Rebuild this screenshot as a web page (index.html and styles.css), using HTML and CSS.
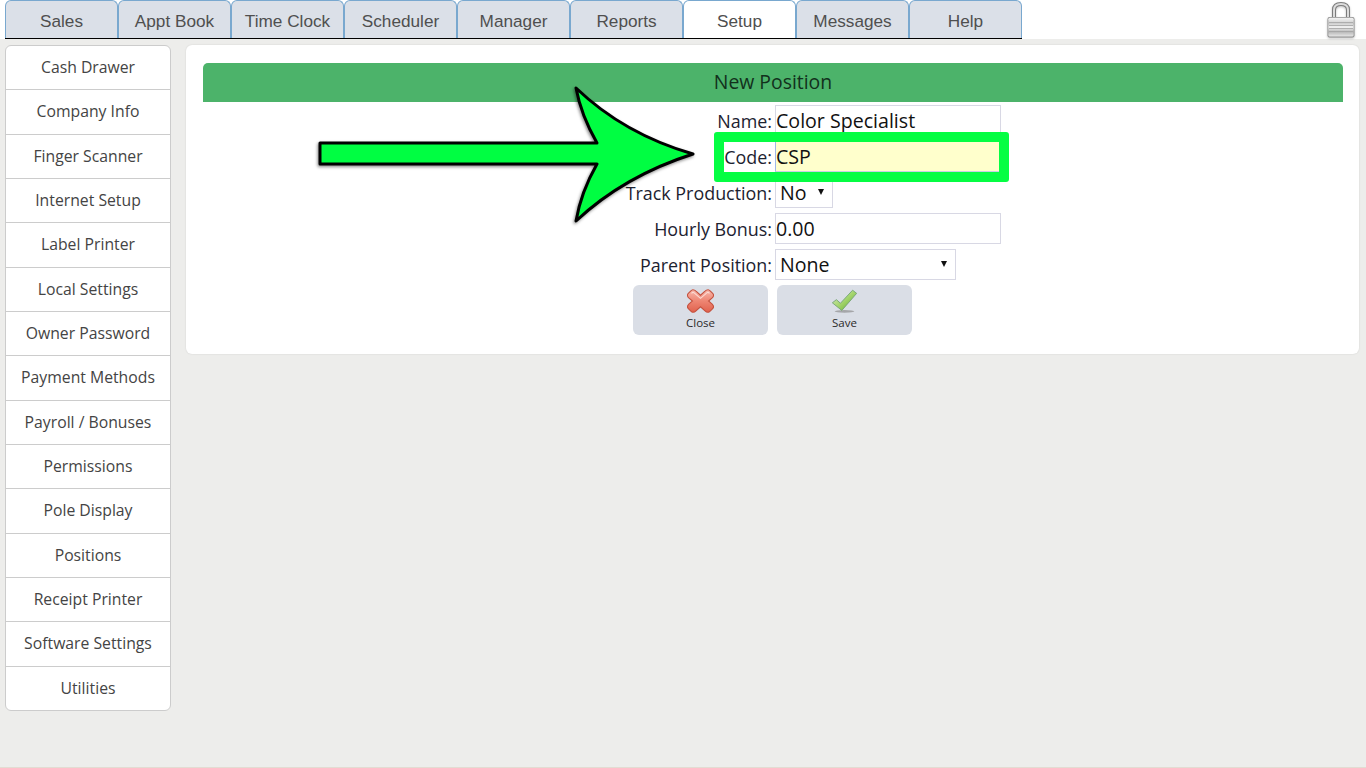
FILE: index.html
```html
<!DOCTYPE html>
<html lang="en">
<head>
<meta charset="utf-8">
<title>Setup - New Position</title>
<link rel="stylesheet" href="styles.css">
</head>
<body>
<header class="topbar">
  <nav class="tabs">
    <a class="tab">Sales</a><a class="tab">Appt Book</a><a class="tab">Time Clock</a><a class="tab">Scheduler</a><a class="tab">Manager</a><a class="tab">Reports</a><a class="tab active">Setup</a><a class="tab">Messages</a><a class="tab">Help</a>
  </nav>
  <svg class="lock" width="30" height="37" viewBox="0 0 30 37">
    <defs>
      <linearGradient id="lockBody" x1="0" y1="0" x2="0" y2="1">
        <stop offset="0" stop-color="#f4f4f4"/><stop offset=".3" stop-color="#cfcfcf"/><stop offset=".5" stop-color="#f2f2f2"/><stop offset=".75" stop-color="#b8b8b8"/><stop offset="1" stop-color="#e6e6e6"/>
      </linearGradient>
    </defs>
    <path d="M8 17V9C8 4.500 10.500 3 15 3s7 1.500 7 6V17" fill="none" stroke="#7c7c7c" stroke-width="4"/>
    <path d="M8 17V9C8 4.500 10.500 3 15 3s7 1.500 7 6V17" fill="none" stroke="#dcdcdc" stroke-width="2"/>
    <rect x="1.500" y="16" width="27" height="20.500" rx="2" fill="#8e8e8e"/>
    <rect x="2.300" y="16.800" width="25.400" height="18.700" rx="1.500" fill="url(#lockBody)"/>
    <path d="M3 21.500h24M3 24.500h24M3 27.500h24M3 30.500h24" stroke="#a2a2a2" stroke-width=".8"/>
  </svg>
</header>

<main class="content">
  <aside class="sidebar">
    <a class="side-item">Cash Drawer</a>
    <a class="side-item">Company Info</a>
    <a class="side-item">Finger Scanner</a>
    <a class="side-item">Internet Setup</a>
    <a class="side-item">Label Printer</a>
    <a class="side-item">Local Settings</a>
    <a class="side-item">Owner Password</a>
    <a class="side-item">Payment Methods</a>
    <a class="side-item">Payroll / Bonuses</a>
    <a class="side-item">Permissions</a>
    <a class="side-item">Pole Display</a>
    <a class="side-item">Positions</a>
    <a class="side-item">Receipt Printer</a>
    <a class="side-item">Software Settings</a>
    <a class="side-item">Utilities</a>
  </aside>

  <section class="panel">
    <h1 class="panel-title">New Position</h1>
    <form class="form">
      <div class="row"><label class="label">Name:</label><div class="field field-text">Color Specialist</div></div>
      <div class="row"><label class="label label-code">Code:</label><div class="field field-text field-focus">CSP</div></div>
      <div class="row"><label class="label">Track Production:</label><div class="field field-select field-short"><span>No</span><i class="caret"></i></div></div>
      <div class="row"><label class="label">Hourly Bonus:</label><div class="field field-text">0.00</div></div>
      <div class="row"><label class="label">Parent Position:</label><div class="field field-select field-wide"><span>None</span><i class="caret"></i></div></div>
    </form>
    <div class="actions">
      <button class="btn" type="button">
        <svg class="btn-icon" viewBox="0 0 30 28">
          <defs><linearGradient id="xg" x1="0" y1="0" x2="0" y2="1"><stop offset="0" stop-color="#f7b9ad"/><stop offset=".5" stop-color="#ee8572"/><stop offset="1" stop-color="#e0624e"/></linearGradient></defs>
          <path d="M6.500 1.500C8 1.500 9 2 10 3l5 4.500L20 3c1-1 2-1.500 3.500-1.500 1 0 1.500.5 2.500 1.500l2 2c1 1 1.500 1.500 1.500 2.500S29 9.500 28 10.500l-4 3.500 4 3.500c1 1 1.500 2 1.500 3s-.5 1.500-1.500 2.500l-2 2c-1 1-1.500 1.500-2.500 1.500-1.500 0-2.500-.5-3.500-1.500l-5-4.500-5 4.500c-1 1-2 1.500-3.500 1.500-1 0-1.500-.5-2.500-1.500l-2-2C1 22 .5 21.500.5 20.500s.5-2 1.500-3L6 14l-4-3.500C1 9.500.5 8.500.5 7.500S1 6 2 5l2-2c1-1 1.500-1.500 2.500-1.500z" fill="url(#xg)" stroke="#c4513e" stroke-width="1.200"/>
          <path d="M5 5.500c1-1 2-1.500 3-.5l7 6 7-6c1-1 2-.5 3 .5" fill="none" stroke="#fbdad3" stroke-width="1.200"/>
        </svg>
        <span>Close</span>
      </button>
      <button class="btn" type="button">
        <svg class="btn-icon" viewBox="0 0 30 28">
          <defs><linearGradient id="cg" x1="0" y1="0" x2="1" y2="1"><stop offset="0" stop-color="#dff0d0"/><stop offset=".5" stop-color="#a5d56e"/><stop offset="1" stop-color="#5da826"/></linearGradient></defs>
          <ellipse cx="15" cy="25.500" rx="11" ry="1.500" fill="#8f8f8f" opacity=".7"/>
          <path d="M1.500 16 6 12.500l4.500 4L24 2l4.500 3.500L12 24.500z" fill="url(#cg)" stroke="#74a474" stroke-width="1" stroke-linejoin="round"/>
        </svg>
        <span>Save</span>
      </button>
    </div>
  </section>
</main>
<div class="footer-line"></div>

<div class="highlight"></div>
<svg class="arrow" width="395" height="150" viewBox="310 80 395 150">
  <defs>
    <filter id="arrowShadow" x="-5%" y="-5%" width="110%" height="115%"><feDropShadow dx="-1" dy="1.500" stdDeviation="1.500" flood-color="#000" flood-opacity=".45"/></filter>
  </defs>
  <path d="M320 143H597Q581 115 576 88Q624 134 693 154Q624 176 576 221Q581 192 597 164H320Z" fill="#05fe43" stroke="#000" stroke-width="3" stroke-linejoin="round" filter="url(#arrowShadow)"/>
</svg>
</body>
</html>
```

FILE: styles.css
```css
* { box-sizing: border-box; }
html, body { margin: 0; padding: 0; }
body {
  position: relative;
  width: 1366px;
  height: 768px;
  overflow: hidden;
  display: flex;
  flex-direction: column;
  background: #ededeb;
  font-family: "Open Sans", sans-serif;
  color: #222;
}
.topbar {
  height: 39px;
  flex: none;
  background: #fff;
  padding: 0 10px 0 5px;
  display: flex;
  justify-content: space-between;
  align-items: flex-start;
}
.tabs { display: flex; height: 39px; border-bottom: 1px solid #000; }
.tab {
  width: 113px;
  height: 38px;
  background: #dbe0e8;
  border: 1px solid #79a8cf;
  border-bottom: 0;
  border-radius: 6px 6px 0 0;
  color: #4f4f4f;
  font: 17.2px/41px "Liberation Sans", Arial, sans-serif;
  text-align: center;
}
.tab.active { background: #fff; }
.lock { margin-top: 1px; filter: drop-shadow(0 1px 1px rgba(0,0,0,.25)); }

.content {
  flex: 1;
  display: flex;
  align-items: flex-start;
  gap: 15px;
  padding: 6px 7px 0 5px;
}
.sidebar {
  width: 166px;
  height: 666px;
  flex: none;
  display: flex;
  flex-direction: column;
  background: #fff;
  border: 1px solid #ccc;
  border-radius: 6px;
}
.side-item {
  flex: 1;
  display: flex;
  align-items: center;
  justify-content: center;
  padding-bottom: 1px;
  font-size: 15.75px;
  color: #444;
  border-bottom: 1px solid #ccc;
}
.side-item:last-child { border-bottom: 0; }

.panel {
  flex: 1;
  height: 309px;
  background: #fff;
  border-radius: 6px;
  box-shadow: 0 0 2px rgba(0,0,0,.12);
  padding: 18px 16px 20px 17px;
}
.panel-title {
  margin: 0;
  height: 39px;
  background: #4cb36a;
  border-radius: 5px 5px 0 0;
  color: #12301c;
  font-size: 19.4px;
  font-weight: 400;
  line-height: 37px;
  text-align: center;
}
.form { padding-top: 3px; display: flex; flex-direction: column; }
.row { display: flex; height: 36px; gap: 3px; }
.label {
  width: 569px;
  flex: none;
  text-align: right;
  font-size: 17.9px;
  line-height: 32px;
  color: #1c2230;
}
.field {
  height: 31px;
  border: 1px solid #d8d8e4;
  background: #fff;
  font-size: 19.6px;
  line-height: 30px;
  color: #111;
}
.field-text { width: 226px; padding-left: 0; }
.field-focus { background: #ffffcc; border-color: #c9cfe6 #ffffcc #c9cfe6 #9fb8ea; }
.field-select {
  display: flex;
  justify-content: space-between;
  align-items: center;
  padding: 0 8px 0 4px;
}
.field-short { width: 58px; height: 30px; margin-top: 1px; }
.field-wide { width: 181px; }
.caret {
  width: 0;
  height: 0;
  margin-top: -2px;
  border-left: 3.500px solid transparent;
  border-right: 3.500px solid transparent;
  border-top: 6px solid #111;
}
.actions { display: flex; justify-content: center; gap: 9px; padding-right: 1px; }
.btn {
  width: 135px;
  height: 50px;
  padding: 3px 0 0;
  border: 0;
  border-radius: 6px;
  background: #dadee6;
  display: flex;
  flex-direction: column;
  align-items: center;
  font-family: "Open Sans", sans-serif;
  font-size: 11.5px;
  line-height: 16px;
  color: #2a2a2a;
}
.btn-icon { display: block; width: 27px; height: 26px; margin-bottom: 1px; }
.footer-line { height: 1px; flex: none; background: #e2dcd2; }

.highlight {
  position: absolute;
  left: 714px;
  top: 132px;
  width: 295px;
  height: 50px;
  border: 10px solid #05fe43;
  border-radius: 3px;
}
.arrow { position: absolute; left: 310px; top: 80px; }
```
